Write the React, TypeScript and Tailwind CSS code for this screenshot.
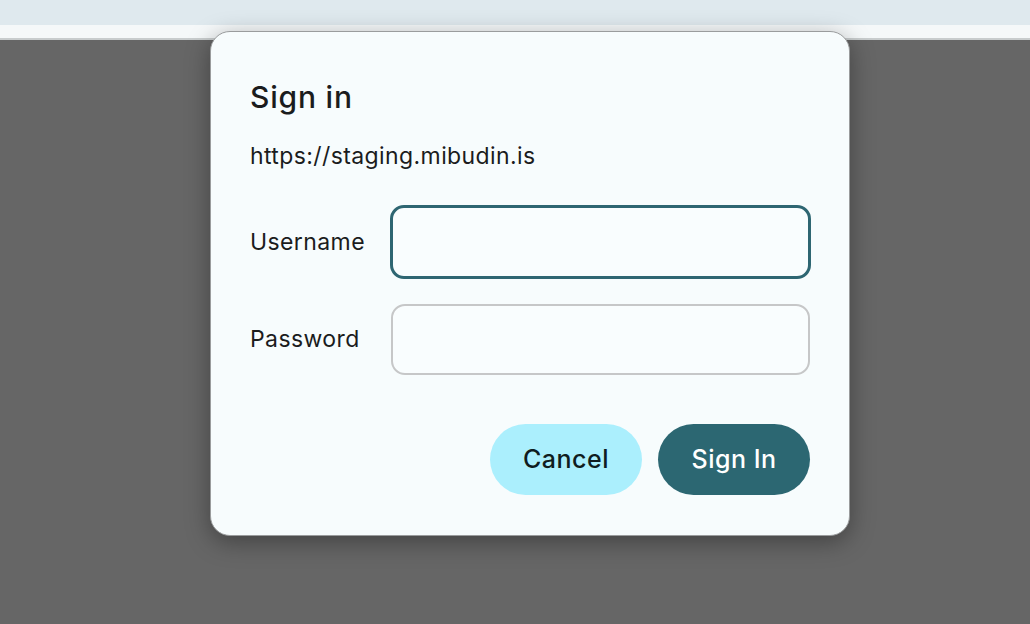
import React from 'react'

export default function App() {
  return (
    <div className="relative w-full h-[624px] flex flex-col overflow-hidden" style={{ fontFamily: 'Inter, "Noto Sans", sans-serif' }}>
      {/* browser chrome behind the modal */}
      <div className="h-[25px] bg-[#dfe9ee]" />
      <div className="h-[13px] bg-[#f5f8f9]" />
      <div className="h-[2px] bg-[#c8cccd]" />
      <div className="flex-1 bg-[#666666]" />

      {/* auth dialog */}
      <div className="absolute left-[210px] top-[31px] w-[640px] h-[505px] rounded-[20px] bg-[#f7fcfd] border border-[#9a9c9d] shadow-[0_6px_24px_rgba(0,0,0,0.35)] flex flex-col px-[39px] pt-[47px] pb-[40px] text-[#1b1c1d]">
        <h1 className="text-[30px] leading-[36px] font-medium tracking-[0.8px]">Sign in</h1>
        <p className="mt-[27px] text-[23px] leading-[28px] tracking-[0.4px]">https://staging.mibudin.is</p>

        <div className="mt-[35px] grid grid-cols-[140px_1fr] items-center gap-y-[25px]">
          <label className="text-[23px] tracking-[0.4px]">Username</label>
          <input
            autoFocus
            className="h-[74px] w-[421px] rounded-[14px] border-[3.5px] border-[#2e6672] bg-[#f9fdfe] outline-none px-4"
          />
          <label className="text-[23px] tracking-[0.4px]">Password</label>
          <input
            type="password"
            className="h-[71px] w-[419px] ml-px rounded-[14px] border-2 border-[#c6c7c8] bg-[#f9fdfe] outline-none px-4"
          />
        </div>

        <div className="mt-auto flex justify-end gap-[16px]">
          <button className="h-[71px] w-[152px] rounded-full bg-[#abeffd] text-[#0f1c20] text-[25px] font-medium tracking-[0.5px]">
            Cancel
          </button>
          <button className="h-[71px] w-[152px] rounded-full bg-[#2c6772] text-white text-[25px] font-medium tracking-[0.5px]">
            Sign In
          </button>
        </div>
      </div>
    </div>
  )
}
